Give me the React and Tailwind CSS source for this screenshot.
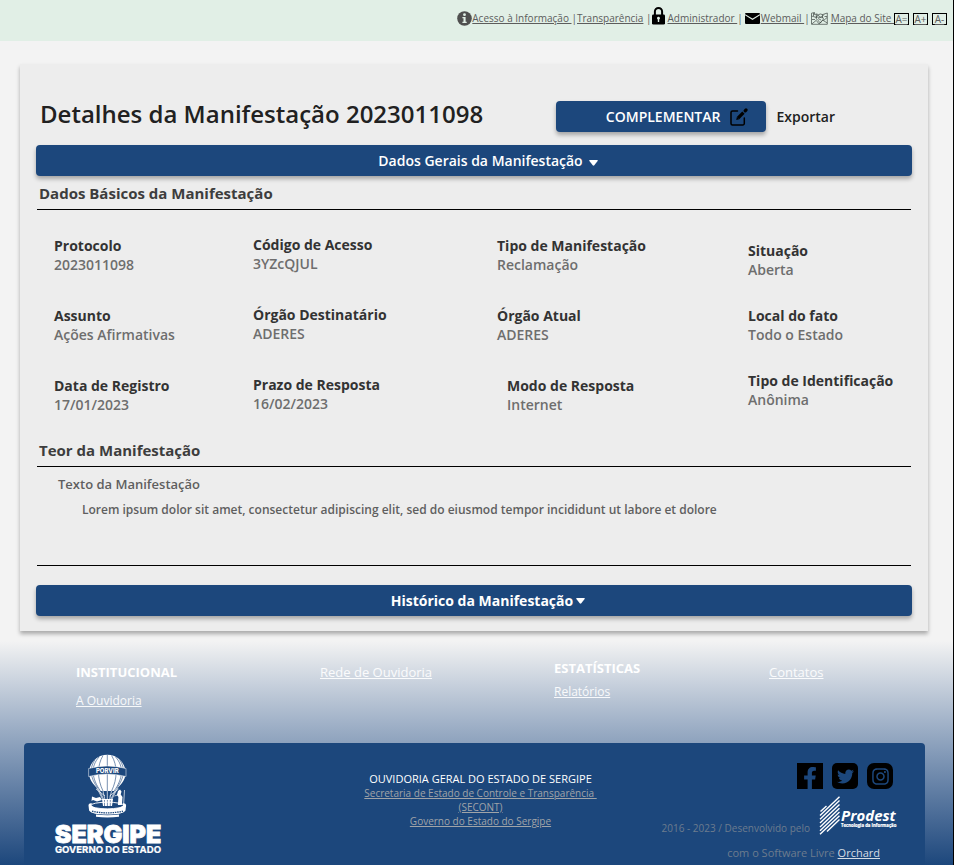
import { FaFacebookF, FaTwitter, FaInstagram } from "react-icons/fa";

const columns = [
  {
    className: "pt-[26px] gap-8",
    items: [
      { label: "Protocolo", value: "2023011098" },
      { label: "Assunto", value: "Ações Afirmativas" },
      { label: "Data de Registro", value: "17/01/2023" },
    ],
  },
  {
    className: "pt-[25px] gap-8",
    items: [
      { label: "Código de Acesso", value: "3YZcQJUL" },
      { label: "Órgão Destinatário", value: "ADERES" },
      { label: "Prazo de Resposta", value: "16/02/2023" },
    ],
  },
  {
    className: "pt-[26px] gap-8",
    items: [
      { label: "Tipo de Manifestação", value: "Reclamação" },
      { label: "Órgão Atual", value: "ADERES" },
      { label: "Modo de Resposta", value: "Internet", className: "pl-[10px]" },
    ],
  },
  {
    className: "pt-[31px] gap-[27px]",
    items: [
      { label: "Situação", value: "Aberta" },
      { label: "Local do fato", value: "Todo o Estado" },
      { label: "Tipo de Identificação", value: "Anônima" },
    ],
  },
];

function InfoIcon() {
  return (
    <svg width="15" height="15" viewBox="0 0 15 15" aria-hidden="true">
      <circle cx="7.5" cy="7.5" r="7.3" fill="#4f4f4f" />
      <circle cx="7.5" cy="3.7" r="1.4" fill="#e1efe6" />
      <path d="M5.4 6h3.2v4.8h1.1v1.3H5.4v-1.3h1.1V7.3H5.4z" fill="#e1efe6" />
    </svg>
  );
}

function LockIcon() {
  return (
    <svg width="13" height="18" viewBox="0 0 13 18" aria-hidden="true">
      <path d="M2.9 8V4.6a3.6 3.6 0 0 1 7.2 0V8" fill="none" stroke="#000" strokeWidth="2" />
      <rect x="0" y="7.4" width="13" height="10.2" rx="1.4" fill="#000" />
      <path d="M5 11.3a1.5 1.5 0 1 1 2.2 1.2v2.4H5.8v-2.4A1.5 1.5 0 0 1 5 11.3z" fill="#e1efe6" />
    </svg>
  );
}

function MailIcon() {
  return (
    <svg width="15" height="11" viewBox="0 0 15 11" aria-hidden="true">
      <rect width="15" height="11" rx="1" fill="#000" />
      <path d="M0 1.6l7.5 4.7L15 1.6" fill="none" stroke="#e1efe6" strokeWidth="1.1" />
    </svg>
  );
}

function MapIcon() {
  return (
    <svg width="17" height="13" viewBox="0 0 17 13" fill="none" stroke="#3c4540" strokeWidth="0.7" aria-hidden="true">
      <path d="M.5 1.2l3-.7v2l2-.5 2 .6 2-.6 2 .6 4.8-1.6v11.3H.5z" />
      <path d="M.5 4l4 1.2L7 3.2l3 2.4 3-3M1 11.8l4.2-3.4 3 3.6 3.4-4 4.6 3M5.3 2v4M11.6 2.3l-.4 4" />
      <path d="M5 5.5c1.600-1.400 3 .6 4 0s3-1 3.400 1c.4 1.800-2 2.500-3 4.500-1-2-4.600-3.500-4.400-5.500z" />
      <path d="M1 7.500h3M12.600 8.500l3.500-3M2.500 1v3M13.500 4.500h2.500M7 6.500l3 1.500" />
    </svg>
  );
}

function EditIcon() {
  return (
    <svg width="18" height="18" viewBox="0 0 18 18" fill="none" stroke="#000" strokeLinecap="round" aria-hidden="true">
      <path d="M7.500 3H2.500A1.500 1.500 0 0 0 1 4.500v11A1.500 1.500 0 0 0 2.500 17h10.300a1.500 1.500 0 0 0 1.500-1.500V10" strokeWidth="1.500" />
      <path d="M8 10.200L13.400 4.600" strokeWidth="3.300" strokeLinecap="butt" />
      <path d="M15.200 2.800l.8-.8" strokeWidth="3.200" />
      <path d="M6.200 12l.7-3 2.400 2.300z" fill="#000" stroke="none" />
    </svg>
  );
}

function Caret() {
  return (
    <svg width="9" height="6" viewBox="0 0 9 6" aria-hidden="true">
      <path d="M.8 0h7.400q1 0 .4.900L5.300 5.300q-.8.900-1.600 0L.4.900Q-.2 0 .8 0z" fill="#fff" />
    </svg>
  );
}

function SergipeLogo() {
  return (
    <svg width="108" height="102" viewBox="0 0 108 102" role="img" aria-label="Sergipe Governo do Estado">
      <path d="M35 19a18.300 18.300 0 1 1 36.600 0c0 8-6.500 13-10.600 18H45.600C41.500 32 35 27 35 19z" fill="#fff" />
      <g fill="none" stroke="#1c477c" strokeWidth="0.6">
        <path d="M53.300 1v36M49 1.500c-6 10-6 23 0 35.500M57.600 1.500c6 10 6 23 0 35.500M45 3c-9 10-7 22 1.500 34M61.600 3c9 10 7 22-1.500 34M41 5.500c-6 9-5 18 3 29M65.600 5.500c6 9 5 18-3 29" />
      </g>
      <path d="M34.600 14.500q18.700-5 37.400 0v8q-18.700-5-37.400 0z" fill="#1c477c" stroke="#fff" strokeWidth="0.500" />
      <text x="53.300" y="19.300" textAnchor="middle" fontSize="6" fill="#fff" className="font-['Inter',sans-serif] font-extrabold">
        PORVIR
      </text>
      <g fill="none" stroke="#fff" strokeWidth="0.700">
        <path d="M43 34l6 12M45.500 37l4.500 9M49 37l2 9M53.300 37v9M57.500 37l-2 9M61 37l-4.500 9M63.500 34l-6 12M42 35l9 7M64.500 35l-9 7" />
      </g>
      <path d="M48 45h11l-1 7h-9z" fill="#fff" />
      <path d="M50.500 46v6M53.400 46v6M56.300 46v6" stroke="#1c477c" strokeWidth="0.600" />
      <path d="M38 42.500l4 1.500 4-1 2 3-5 1.500-4-1.500-1.500 1zM64 37l2-1.500 1.500 2-.8 3 1.800 2.500-.6 8h-4l.5-8-1.500-2z" fill="#fff" />
      <path d="M70.500 36l-1 16M60.500 42l3-1" stroke="#fff" strokeWidth="0.700" />
      <ellipse cx="53.300" cy="51.500" rx="16.500" ry="3.300" fill="none" stroke="#fff" strokeWidth="0.900" />
      <path d="M34.500 51.500c0-2 2-2.500 3.500-2-3 4 8 5.500 15.300 5.500s18.300-1.500 15.300-5.500c1.500-.5 3.500 0 3.500 2l-.6 5c-2 3-8 4-18.200 4s-16.200-1-18.200-4z" fill="#fff" />
      <path d="M38 57.200q15.300 3.300 31 0" fill="none" stroke="#1c477c" strokeWidth="1.300" strokeDasharray="1.500 .8" />
      <path d="M42 60.500q11.300 1.500 23 0v2.200q-11.700 1.500-23 0z" fill="#fff" />
      <text x="54" y="89" textAnchor="middle" fontSize="25" fill="#fff" stroke="#fff" strokeWidth="0.800" className="font-['Inter',sans-serif] font-black">
        SERGIPE
      </text>
      <text x="54" y="99" textAnchor="middle" fontSize="9.600" fill="#fff" stroke="#fff" strokeWidth="0.200" className="font-['Inter',sans-serif] font-bold">
        GOVERNO DO ESTADO
      </text>
    </svg>
  );
}

function ProdestLogo() {
  return (
    <svg width="80" height="39" viewBox="0 0 80 39" role="img" aria-label="Prodest Tecnologia da Informação">
      <g fill="none" stroke="#fff" strokeWidth="1.400">
        <path d="M1.500 15.500L7.500 10M1 19.500L20.500.8M1 23.300L20.500 4.600M1 27.100L20.500 8.400M1 30.900L20.500 12.200M1 34.700L20.500 16M1 38.300L20.500 19.800M8 35.400L20.500 23.600" />
      </g>
      <text x="22" y="25" fontSize="15" fill="#fff" className="font-['Open_Sans',sans-serif] font-bold italic">
        Prodest
      </text>
      <text x="22" y="31" fontSize="4.300" fill="#fff" stroke="#fff" strokeWidth="0.200" className="font-['Open_Sans',sans-serif] font-bold">
        Tecnologia da Informação
      </text>
    </svg>
  );
}

function SectionTitle({ children }) {
  return (
    <h2 className="mx-px border-b border-black pb-1 pl-[2px] text-[15px] leading-6 font-bold text-[#3d3d3d]">
      {children}
    </h2>
  );
}

function BarButton({ className, children }) {
  return (
    <button
      type="button"
      className={`flex h-[31px] w-full items-center justify-center rounded bg-[#1c477c] pl-7 text-sm text-white shadow-[0_3px_4px_rgba(0,0,0,0.3)] ${className}`}
    >
      {children}
    </button>
  );
}

export default function App() {
  return (
    <div className="min-h-screen border-r border-black bg-[#f3f3f3] font-['Open_Sans',sans-serif]">
      <header className="flex h-[41px] items-start justify-end bg-[#e1efe6] pt-2 pr-[6px] text-[10px] text-[#5c5c5c]">
        <nav className="flex h-5 items-center whitespace-pre">
          <InfoIcon />
          <a href="#acesso" className="underline">{"Acesso à Informação "}</a>
          <span>|</span>
          <a href="#transparencia" className="underline">Transparência</a>
          <span> |</span>
          <span className="pb-1"><LockIcon /></span>
          <a href="#admin" className="ml-[3px] underline">{"Administrador "}</a>
          <span className="pr-[2px]">|</span>
          <MailIcon />
          <a href="#webmail" className="ml-px underline">{"Webmail "}</a>
          <span className="pr-px">|</span>
          <MapIcon />
          <a href="#mapa" className="ml-[3px] underline">{"Mapa do Site "}</a>
        </nav>
        <div className="flex gap-1 pt-[5px]">
          <button type="button" className="h-3 w-[15px] border border-black text-[10px] leading-[10px] underline">A=</button>
          <button type="button" className="h-3 w-[15px] border border-black text-[10px] leading-[10px] underline">A+</button>
          <button type="button" className="h-3 w-[15px] border border-black text-[10px] leading-[10px] underline">A-</button>
        </div>
      </header>

      <main className="mt-[23px] mr-[25px] mb-[10px] ml-5 bg-[#ededed] px-4 pt-[37px] pb-[15px] shadow-[0_3px_4px_rgba(0,0,0,0.3)]">
        <div className="flex items-start pl-1">
          <h1 className="flex-1 text-2xl leading-[26px] font-semibold text-[#212121]">
            Detalhes da Manifestação 2023011098
          </h1>
          <button
            type="button"
            className="flex h-[31px] w-[210px] items-center justify-end gap-[10px] rounded bg-[#1c477c] pr-[18px] text-sm font-semibold text-white shadow-[0_3px_4px_rgba(0,0,0,0.3)]"
          >
            COMPLEMENTAR
            <EditIcon />
          </button>
          <button type="button" className="mr-[77px] ml-[10px] h-[31px] text-sm font-semibold text-[#212121]">
            Exportar
          </button>
        </div>

        <div className="mt-[13px] mb-[5px]">
          <BarButton className="gap-[6px] font-semibold">
            Dados Gerais da Manifestação
            <span className="pt-1"><Caret /></span>
          </BarButton>
        </div>

        <section>
          <SectionTitle>Dados Básicos da Manifestação</SectionTitle>
          <div className="grid grid-cols-[199fr_244fr_251fr_164fr] pb-6 pl-[18px] text-sm leading-[19px]">
            {columns.map((column, i) => (
              <dl key={i} className={`flex flex-col ${column.className}`}>
                {column.items.map((item) => (
                  <div key={item.label} className={item.className}>
                    <dt className="font-bold text-[#333]">{item.label}</dt>
                    <dd className="font-semibold text-[#6e6e6e]">{item.value}</dd>
                  </div>
                ))}
              </dl>
            ))}
          </div>
        </section>

        <section className="mb-[19px]">
          <SectionTitle>Teor da Manifestação</SectionTitle>
          <div className="mx-px border-b border-black pt-[7px] pb-[45px] pl-[21px] font-semibold text-[#5f5f5f]">
            <h3 className="text-[13px] leading-5">Texto da Manifestação</h3>
            <p className="mt-[6px] pl-6 text-xs leading-5">
              Lorem ipsum dolor sit amet, consectetur adipiscing elit, sed do eiusmod tempor incididunt ut labore et dolore
            </p>
          </div>
        </section>

        <BarButton className="gap-[3px] font-bold">
          Histórico da Manifestação
          <Caret />
        </BarButton>
      </main>

      <footer className="bg-linear-to-b from-[#f3f3f3] to-[#1c477c] pr-7 pl-6 text-white">
        <nav className="grid h-[102px] grid-cols-[244fr_234fr_215fr_156fr] items-start pl-[52px] text-[13px] leading-5">
          <div className="flex flex-col items-start gap-[9px] pt-[21px]">
            <h4 className="font-bold">INSTITUCIONAL</h4>
            <a href="#ouvidoria" className="text-xs leading-5 text-white/90 underline">A Ouvidoria</a>
          </div>
          <a href="#rede" className="pt-[21px] text-white/90 underline">Rede de Ouvidoria</a>
          <div className="flex flex-col items-start gap-1 pt-[17px]">
            <h4 className="font-bold">ESTATÍSTICAS</h4>
            <a href="#relatorios" className="text-xs leading-5 text-white/90 underline">Relatórios</a>
          </div>
          <a href="#contatos" className="pt-[21px] text-white/90 underline">Contatos</a>
        </nav>

        <div className="grid grid-cols-[1fr_auto_1fr] items-start rounded bg-[#1c477c] pr-[26px] pl-[30px]">
          <div className="pt-[11px]">
            <SergipeLogo />
          </div>
          <div className="flex flex-col items-center pt-[29px] pl-2 text-[10px] leading-[14px] text-[#a0a4a8]">
            <p className="text-[11px] text-white">OUVIDORIA GERAL DO ESTADO DE SERGIPE</p>
            <a href="#secont" className="text-center whitespace-pre underline">
              {"Secretaria de Estado de Controle e Transparência \n(SECONT)"}
            </a>
            <a href="#governo" className="underline">Governo do Estado do Sergipe</a>
          </div>
          <div className="flex flex-col items-end pt-5 text-[#6c7c8e]">
            <div className="flex gap-[9px] pr-[6px] text-[#1c477c]">
              <a href="#facebook" aria-label="Facebook" className="flex size-[26px] items-end justify-end bg-black pr-[2px]">
                <FaFacebookF size={22} />
              </a>
              <a href="#twitter" aria-label="Twitter" className="flex size-[26px] items-center justify-center rounded-[5px] bg-black">
                <FaTwitter size={17} />
              </a>
              <a href="#instagram" aria-label="Instagram" className="flex size-[26px] items-center justify-center rounded-[7px] bg-black">
                <FaInstagram size={19} />
              </a>
            </div>
            <div className="mt-[7px] flex items-end gap-[9px] text-[10px] leading-[14px]">
              <span className="whitespace-nowrap">2016 - 2023 / Desenvolvido pelo</span>
              <ProdestLogo />
            </div>
            <p className="mt-[10px] pr-[19px] pb-1 text-[11px] leading-4">
              com o Software Livre <a href="#orchard" className="text-[#d5dce4] underline">Orchard</a>
            </p>
          </div>
        </div>
      </footer>
    </div>
  );
}
